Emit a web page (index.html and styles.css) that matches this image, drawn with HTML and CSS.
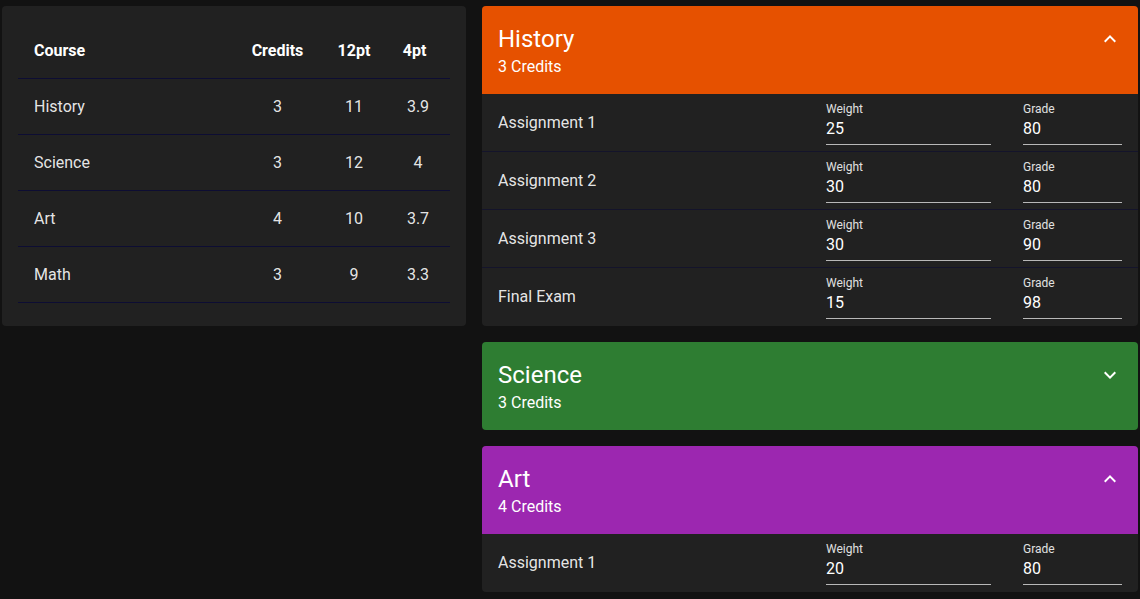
FILE: index.html
```html
<!DOCTYPE html>
<html lang="en">
<head>
<meta charset="utf-8">
<title>Grades</title>
<link rel="stylesheet" href="styles.css">
</head>
<body>
<div class="layout">
  <section class="summary">
    <table class="grades">
      <colgroup><col><col class="col-credits"><col class="col-12"><col class="col-4"></colgroup>
      <thead>
        <tr><th class="c-course">Course</th><th>Credits</th><th>12pt</th><th class="c-4">4pt</th></tr>
      </thead>
      <tbody>
        <tr><td class="c-course">History</td><td>3</td><td>11</td><td class="c-4">3.9</td></tr>
        <tr><td class="c-course">Science</td><td>3</td><td>12</td><td class="c-4">4</td></tr>
        <tr><td class="c-course">Art</td><td>4</td><td>10</td><td class="c-4">3.7</td></tr>
        <tr><td class="c-course">Math</td><td>3</td><td>9</td><td class="c-4">3.3</td></tr>
      </tbody>
    </table>
  </section>

  <div class="panels">
    <div class="panel">
      <div class="panel-head orange">
        <div class="head-top">
          <span class="title">History</span>
          <svg class="chev" viewBox="0 0 24 24"><path d="M7.41,15.41L12,10.83L16.59,15.41L18,14L12,8L6,14L7.41,15.41Z"/></svg>
        </div>
        <div class="sub">3 Credits</div>
      </div>
      <div class="row">
        <span class="name">Assignment 1</span>
        <div class="field w"><span class="lbl">Weight</span><span class="val">25</span></div>
        <div class="field g"><span class="lbl">Grade</span><span class="val">80</span></div>
      </div>
      <div class="row">
        <span class="name">Assignment 2</span>
        <div class="field w"><span class="lbl">Weight</span><span class="val">30</span></div>
        <div class="field g"><span class="lbl">Grade</span><span class="val">80</span></div>
      </div>
      <div class="row">
        <span class="name">Assignment 3</span>
        <div class="field w"><span class="lbl">Weight</span><span class="val">30</span></div>
        <div class="field g"><span class="lbl">Grade</span><span class="val">90</span></div>
      </div>
      <div class="row">
        <span class="name">Final Exam</span>
        <div class="field w"><span class="lbl">Weight</span><span class="val">15</span></div>
        <div class="field g"><span class="lbl">Grade</span><span class="val">98</span></div>
      </div>
    </div>

    <div class="panel">
      <div class="panel-head green">
        <div class="head-top">
          <span class="title">Science</span>
          <svg class="chev" viewBox="0 0 24 24"><path d="M7.41,8.59L12,13.17L16.59,8.59L18,10L12,16L6,10L7.41,8.59Z"/></svg>
        </div>
        <div class="sub">3 Credits</div>
      </div>
    </div>

    <div class="panel">
      <div class="panel-head purple">
        <div class="head-top">
          <span class="title">Art</span>
          <svg class="chev" viewBox="0 0 24 24"><path d="M7.41,15.41L12,10.83L16.59,15.41L18,14L12,8L6,14L7.41,15.41Z"/></svg>
        </div>
        <div class="sub">4 Credits</div>
      </div>
      <div class="row">
        <span class="name">Assignment 1</span>
        <div class="field w"><span class="lbl">Weight</span><span class="val">20</span></div>
        <div class="field g"><span class="lbl">Grade</span><span class="val">80</span></div>
      </div>
    </div>
  </div>
</div>
</body>
</html>
```

FILE: styles.css
```css
html, body {
  margin: 0;
  background: #121212;
  overflow: hidden;
}
body {
  padding: 6px 2px;
  font-family: Roboto, "Liberation Sans", sans-serif;
  color: rgba(255, 255, 255, 0.9);
}
.layout {
  display: grid;
  grid-template-columns: 464px 1fr;
  column-gap: 16px;
  align-items: start;
}
.summary {
  background: #212121;
  border-radius: 4px;
  padding: 17px 16px 23px;
}
.grades {
  width: 100%;
  border-collapse: collapse;
  table-layout: fixed;
  font-size: 16px;
}
.col-credits { width: 87px; }
.col-12 { width: 66px; }
.col-4 { width: 63px; }
.grades tr {
  border-bottom: 1px solid #0d0d33;
}
.grades th, .grades td {
  height: 55px;
  padding: 0;
  text-align: center;
}
.grades th {
  font-weight: 700;
  color: #fff;
}
.grades .c-course {
  text-align: left;
  padding-left: 16px;
}
.grades th.c-4 { padding-right: 8px; }
.grades td.c-4 { padding-right: 1px; }

.panels {
  display: flex;
  flex-direction: column;
  gap: 16px;
}
.panel {
  border-radius: 4px;
  overflow: hidden;
  background: #212121;
}
.panel-head {
  padding: 17px 16px 15px;
  color: #fff;
}
.orange { background: #e65100; }
.green { background: #2e7d32; }
.purple { background: #9c27b0; }
.head-top {
  display: flex;
  align-items: center;
  justify-content: space-between;
  height: 32px;
}
.title {
  font-size: 24px;
  line-height: 32px;
}
.chev {
  width: 24px;
  height: 24px;
  fill: #fff;
}
.sub {
  font-size: 16px;
  line-height: 24px;
}
.row {
  display: flex;
  align-items: center;
  padding: 7px 16px 6px;
  border-bottom: 1px solid #14142b;
  font-size: 16px;
}
.row:last-child {
  border-bottom: none;
  padding-bottom: 7px;
}
.name {
  flex: 1;
  padding-bottom: 2px;
}
.field {
  display: flex;
  flex-direction: column;
  border-bottom: 1px solid #b8b8b8;
  padding-bottom: 5px;
}
.field.w { width: 165px; margin-right: 32px; }
.field.g { width: 99px; }
.lbl {
  font-size: 12px;
  line-height: 16px;
  color: #e0e0e0;
}
.val {
  font-size: 16px;
  line-height: 20px;
  margin-top: 2px;
  color: #fff;
}
```
